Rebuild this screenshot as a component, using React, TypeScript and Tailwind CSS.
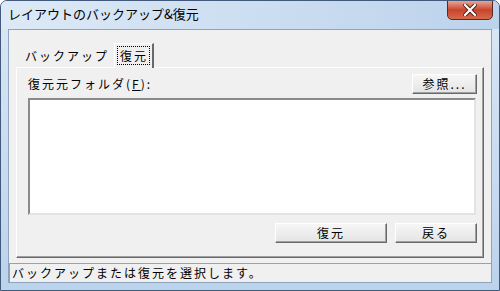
import React from 'react';

const jp = { fontFamily: '"Noto Sans CJK JP", "Noto Sans", sans-serif' };

const Button = ({ label, w }: { label: React.ReactNode; w: string }) => (
  <button
    className={`${w} h-[20px] flex items-center justify-center bg-gradient-to-b from-[#f6f6f6] to-[#e4e4e4] border border-t-white border-l-white border-r-[#696969] border-b-[#696969] shadow-[inset_-1px_-1px_0_#a0a0a0] text-[12px] tracking-[2px] text-black leading-none`}
  >
    {label}
  </button>
);

const App = () => {
  return (
    <div
      style={jp}
      className="w-[500px] h-[291px] flex flex-col rounded-t-[7px] border border-[#41597a] bg-gradient-to-b from-[#dbe7f5] to-[#bcd3ec] overflow-hidden"
    >
      {/* Title bar */}
      <div className="h-[28px] flex items-start justify-between bg-gradient-to-r from-[#dde9f6] to-[#bcd3ec]">
        <span className="pl-[7px] pt-[5px] text-[13px] leading-[16px] text-black">
          レイアウトのバックアップ&amp;復元
        </span>
        <div className="mr-[6px] -mt-px w-[46px] h-[20px] rounded-b-[5px] border border-[#5a2a22] bg-gradient-to-b from-[#e8a493] via-[#c7442c] to-[#d56a4c] flex items-center justify-center">
          <svg width="14" height="12" viewBox="0 0 14 12">
            <path d="M2 1 L12 11 M12 1 L2 11" stroke="#4a1a12" strokeWidth="4" strokeLinecap="square" />
            <path d="M2 1 L12 11 M12 1 L2 11" stroke="#ffffff" strokeWidth="2.2" strokeLinecap="square" />
          </svg>
        </div>
      </div>

      {/* Client area */}
      <div className="mx-[7px] h-[254px] flex flex-col bg-[#f0f0f0] border border-[#8ea3bd]">
        {/* Tabs */}
        <div className="flex items-end h-[37px] pl-[12px]">
          <div className="h-[21px] px-[4px] mb-px flex items-center text-[12px] tracking-[2px] text-black">
            バックアップ
          </div>
          <div className="h-[25px] ml-[1px] px-[2px] pt-[2px] flex items-start border-l border-t border-white border-r-2 border-r-[#696969] relative -mb-px bg-[#f0f0f0] z-10">
            <span className="pl-[2px] pr-[1px] h-[19px] flex items-center border border-dotted border-black text-[12px] tracking-[2px] text-black">
              復元
            </span>
          </div>
        </div>

        {/* Tab panel */}
        <div className="mx-[7px] h-[191px] flex flex-col border border-t-white border-l-white border-r-[#696969] border-b-[#696969] shadow-[inset_-1px_-1px_0_#a0a0a0] pl-[11px] pr-[6px] pt-[6px]">
          <div className="flex items-center justify-between">
            <span className="text-[12px] tracking-[2px] text-black">
              復元元フォルダ(<span className="underline">F</span>):
            </span>
            <Button label="参照..." w="w-[65px]" />
          </div>
          <div className="mt-[4px] mr-[1px] h-[117px] bg-white border-2 border-t-[#8a8a8a] border-l-[#8a8a8a] border-r-[#e3e3e3] border-b-[#e3e3e3]" />
          <div className="mt-[8px] flex justify-end gap-[8px]">
            <Button label="復元" w="w-[112px]" />
            <Button label="戻る" w="w-[82px]" />
          </div>
        </div>

        {/* Status bar */}
        <div className="mt-[5px] flex-1 flex items-center pl-[2px] border-t border-l border-t-[#a0a0a0] border-l-[#a0a0a0] text-[12px] tracking-[2px] text-black">
          バックアップまたは復元を選択します。
        </div>
      </div>
    </div>
  );
};

export default App;
